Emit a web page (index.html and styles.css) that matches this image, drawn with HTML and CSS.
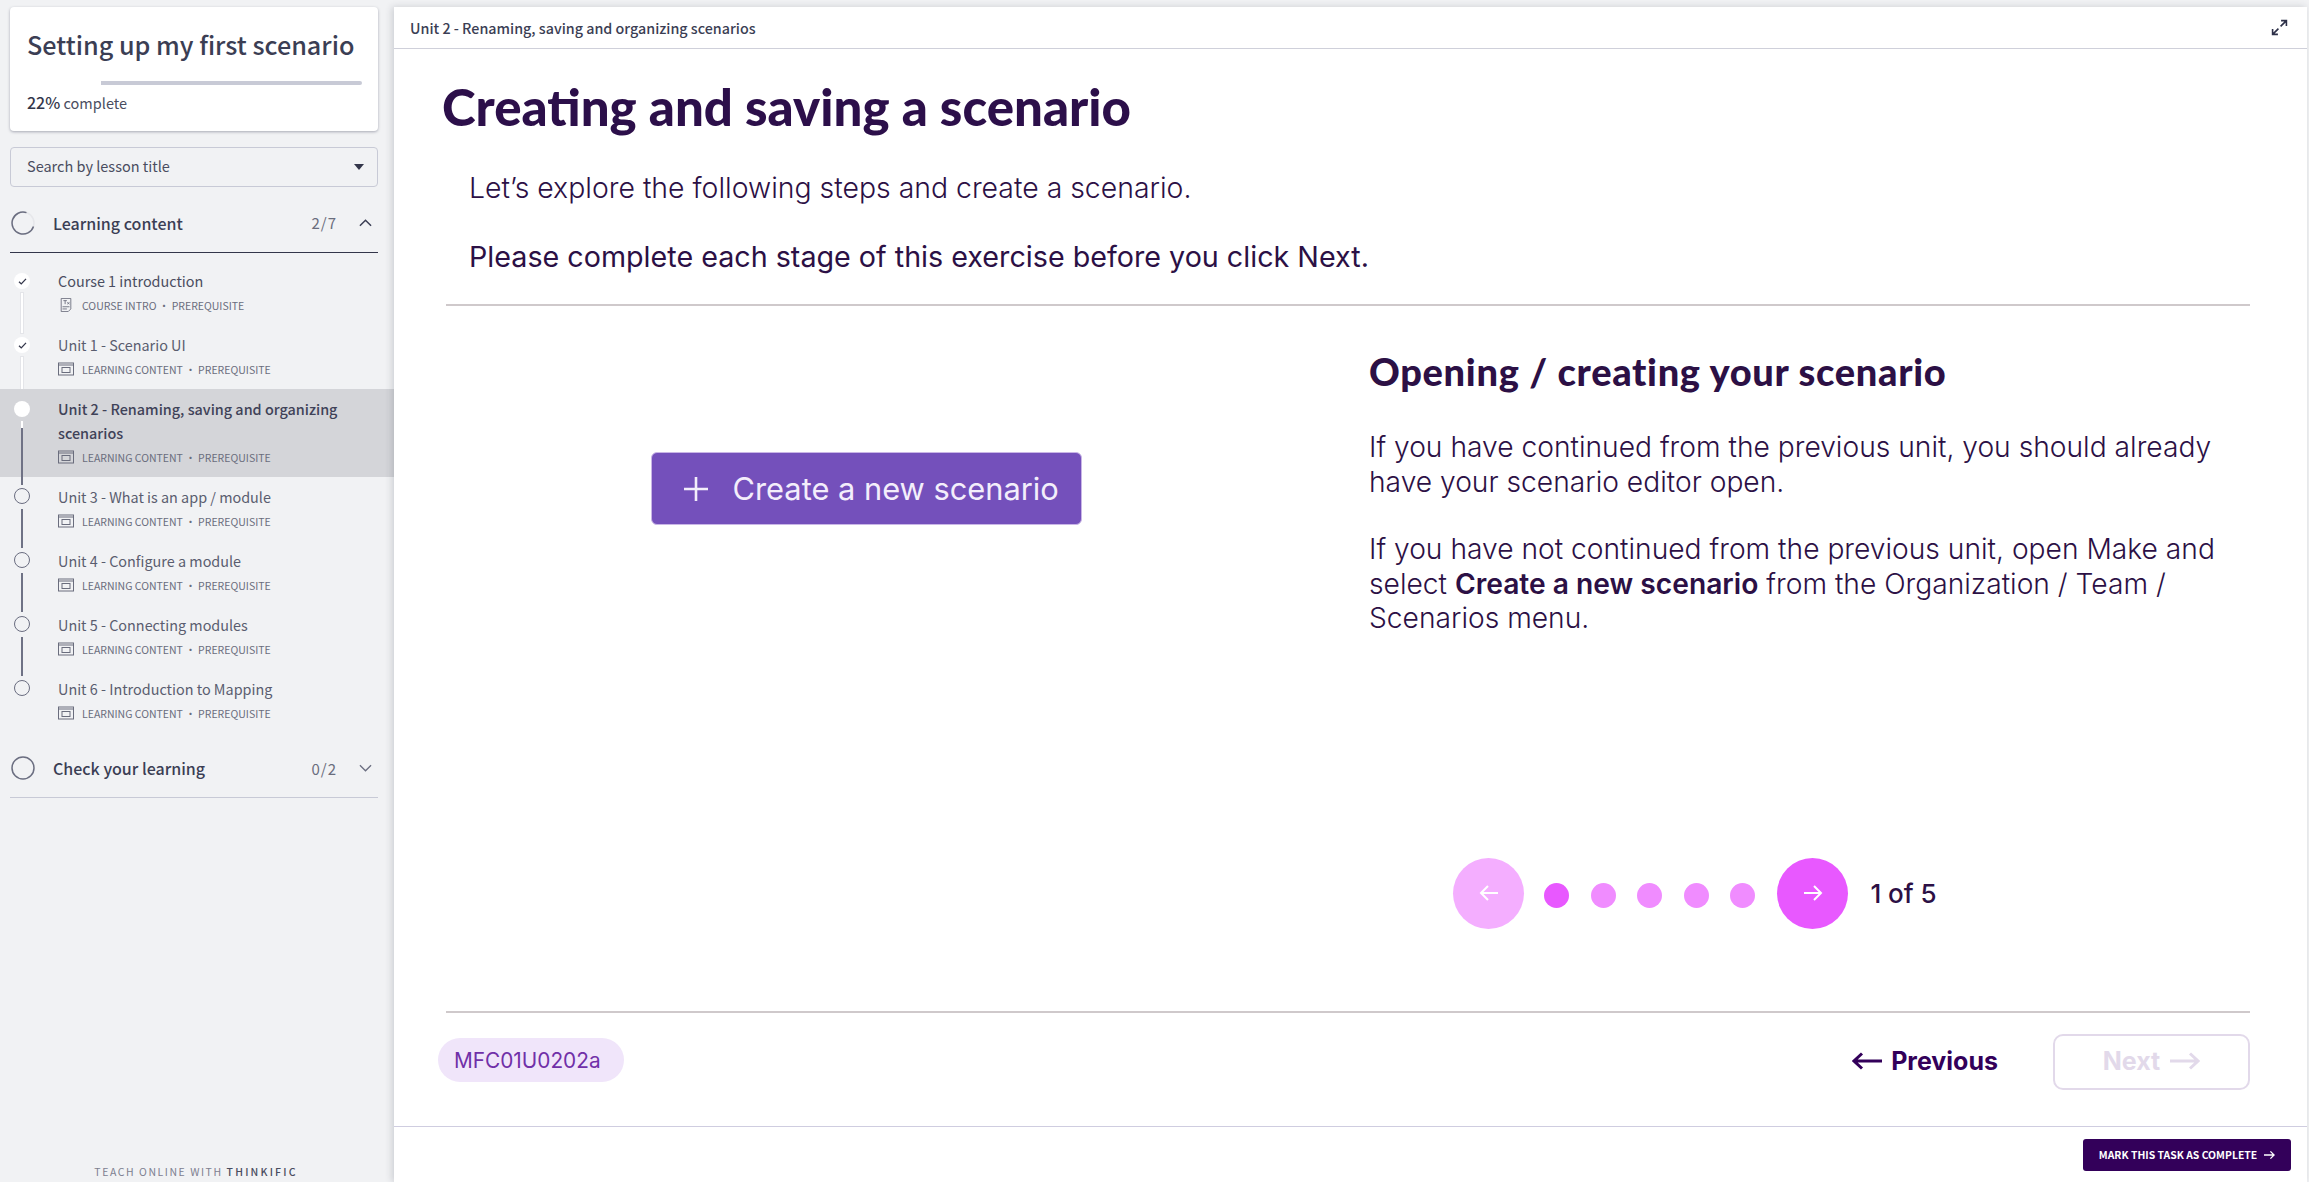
FILE: index.html
```html
<!DOCTYPE html>
<html lang="en">
<head>
    <meta charset="UTF-8">
    <title>Creating and saving a scenario</title>
    <link rel="stylesheet" href="styles.css">
</head>
<body>
    <aside class="sidebar">
        <div class="course-card">
            <h2 class="course-title">Setting up my first scenario</h2>
            <div class="progress"><div class="progress-fill"></div></div>
            <p class="progress-text"><b>22%</b> complete</p>
        </div>

        <div class="search">
            <span>Search by lesson title</span>
            <span class="caret"></span>
        </div>

        <div class="chapter chapter-open">
            <svg class="ring" viewBox="0 0 24 24"><circle cx="12" cy="12" r="11" fill="none" stroke="#e6e7ea" stroke-width="1.5"/><path d="M22.5 15.5A11 11 0 1 1 15.5 1.6" fill="none" stroke="#6b6e80" stroke-width="1.5"/></svg>
            <span class="chapter-title">Learning content</span>
            <span class="chapter-count">2/7</span>
            <svg class="chevron" viewBox="0 0 14 8"><path d="M1 7l6-6 6 6" fill="none" stroke="#3b3e54" stroke-width="1.6"/></svg>
        </div>

        <ul class="lessons">
            <li class="lesson-item">
                <span class="dot dot-done"><svg viewBox="0 0 10 8"><path d="M1 4.2l2.6 2.5L9 1" fill="none" stroke="#33364a" stroke-width="1.5"/></svg></span>
                <span class="link link-done"></span>
                <div class="lesson-name lesson-name-dark">Course 1 introduction</div>
                <div class="lesson-meta">
                    <svg class="meta-icon" viewBox="0 0 16 16"><path d="M2.5.5h11v12l-3 3h-8z" fill="none" stroke="#6a6d7d"/><path d="M5 3h4M7 3v4M9.500 5l2.500 2M12 5l-2.500 2M4 10h8M4 12.500h5" fill="none" stroke="#6a6d7d"/></svg>
                    <span>COURSE INTRO &middot; PREREQUISITE</span>
                </div>
            </li>
            <li class="lesson-item">
                <span class="dot dot-done"><svg viewBox="0 0 10 8"><path d="M1 4.2l2.6 2.5L9 1" fill="none" stroke="#33364a" stroke-width="1.5"/></svg></span>
                <span class="link link-done"></span>
                <div class="lesson-name">Unit 1 - Scenario UI</div>
                <div class="lesson-meta">
                    <svg class="meta-icon" viewBox="0 0 16 13"><rect x=".5" y=".5" width="15" height="12" fill="none" stroke="#6a6d7d"/><path d="M.5 2.500h15" stroke="#6a6d7d"/><rect x="4" y="5" width="8" height="5" fill="none" stroke="#6a6d7d"/></svg>
                    <span>LEARNING CONTENT &middot; PREREQUISITE</span>
                </div>
            </li>
            <li class="lesson-item lesson-active">
                <span class="dot dot-current"></span>
                <span class="link link-current"></span>
                <div class="lesson-name">Unit 2 - Renaming, saving and organizing scenarios</div>
                <div class="lesson-meta">
                    <svg class="meta-icon" viewBox="0 0 16 13"><rect x=".5" y=".5" width="15" height="12" fill="none" stroke="#6a6d7d"/><path d="M.5 2.500h15" stroke="#6a6d7d"/><rect x="4" y="5" width="8" height="5" fill="none" stroke="#6a6d7d"/></svg>
                    <span>LEARNING CONTENT &middot; PREREQUISITE</span>
                </div>
            </li>
            <li class="lesson-item">
                <span class="dot dot-todo"></span>
                <span class="link link-todo"></span>
                <div class="lesson-name">Unit 3 - What is an app / module</div>
                <div class="lesson-meta">
                    <svg class="meta-icon" viewBox="0 0 16 13"><rect x=".5" y=".5" width="15" height="12" fill="none" stroke="#6a6d7d"/><path d="M.5 2.500h15" stroke="#6a6d7d"/><rect x="4" y="5" width="8" height="5" fill="none" stroke="#6a6d7d"/></svg>
                    <span>LEARNING CONTENT &middot; PREREQUISITE</span>
                </div>
            </li>
            <li class="lesson-item">
                <span class="dot dot-todo"></span>
                <span class="link link-todo"></span>
                <div class="lesson-name">Unit 4 - Configure a module</div>
                <div class="lesson-meta">
                    <svg class="meta-icon" viewBox="0 0 16 13"><rect x=".5" y=".5" width="15" height="12" fill="none" stroke="#6a6d7d"/><path d="M.5 2.500h15" stroke="#6a6d7d"/><rect x="4" y="5" width="8" height="5" fill="none" stroke="#6a6d7d"/></svg>
                    <span>LEARNING CONTENT &middot; PREREQUISITE</span>
                </div>
            </li>
            <li class="lesson-item">
                <span class="dot dot-todo"></span>
                <span class="link link-todo"></span>
                <div class="lesson-name">Unit 5 - Connecting modules</div>
                <div class="lesson-meta">
                    <svg class="meta-icon" viewBox="0 0 16 13"><rect x=".5" y=".5" width="15" height="12" fill="none" stroke="#6a6d7d"/><path d="M.5 2.500h15" stroke="#6a6d7d"/><rect x="4" y="5" width="8" height="5" fill="none" stroke="#6a6d7d"/></svg>
                    <span>LEARNING CONTENT &middot; PREREQUISITE</span>
                </div>
            </li>
            <li class="lesson-item">
                <span class="dot dot-todo"></span>
                <div class="lesson-name">Unit 6 - Introduction to Mapping</div>
                <div class="lesson-meta">
                    <svg class="meta-icon" viewBox="0 0 16 13"><rect x=".5" y=".5" width="15" height="12" fill="none" stroke="#6a6d7d"/><path d="M.5 2.500h15" stroke="#6a6d7d"/><rect x="4" y="5" width="8" height="5" fill="none" stroke="#6a6d7d"/></svg>
                    <span>LEARNING CONTENT &middot; PREREQUISITE</span>
                </div>
            </li>
        </ul>

        <div class="chapter chapter-closed">
            <svg class="ring" viewBox="0 0 24 24"><circle cx="12" cy="12" r="11" fill="none" stroke="#6b6e80" stroke-width="1.5"/></svg>
            <span class="chapter-title">Check your learning</span>
            <span class="chapter-count">0/2</span>
            <svg class="chevron" viewBox="0 0 14 8"><path d="M1 1l6 6 6-6" fill="none" stroke="#6b6e80" stroke-width="1.4"/></svg>
        </div>

        <div class="powered">TEACH ONLINE WITH <b>THINKIFIC</b></div>
    </aside>

    <main class="player">
        <header class="topbar">
            <span class="topbar-title">Unit 2 - Renaming, saving and organizing scenarios</span>
            <svg class="expand" viewBox="0 0 16 16"><path d="M9.500 1.500h5v5M14.500 1.500L9 7M6.500 14.500h-5v-5M1.500 14.500L7 9" fill="none" stroke="#2d3048" stroke-width="1.500"/></svg>
        </header>

        <section class="content">
            <h1 class="page-title">Creating and saving a scenario</h1>
            <p class="intro intro-light">Let&rsquo;s explore the following steps and create a scenario.</p>
            <p class="intro">Please complete each stage of this exercise before you click Next.</p>

            <div class="slide">
                <div class="slide-image">
                    <div class="fake-button">
                        <svg viewBox="0 0 26 26"><path d="M13 1v24M1 13h24" fill="none" stroke="#f3eefb" stroke-width="2.600"/></svg>
                        <span>Create a new scenario</span>
                    </div>
                </div>
                <div class="slide-text">
                    <h2 class="slide-title">Opening / creating your scenario</h2>
                    <p>If you have continued from the previous unit, you should already have your scenario editor open.</p>
                    <p>If you have not continued from the previous unit, open Make and select <b>Create a new scenario</b> from the Organization / Team / Scenarios menu.</p>

                    <div class="pager">
                        <span class="pager-btn pager-btn-off"><svg viewBox="0 0 20 18"><path d="M19 9H2M9 2L2 9l7 7" fill="none" stroke="#fff" stroke-width="2"/></svg></span>
                        <div class="pager-dots">
                            <span class="pager-dot pager-dot-on"></span>
                            <span class="pager-dot"></span>
                            <span class="pager-dot"></span>
                            <span class="pager-dot"></span>
                            <span class="pager-dot"></span>
                        </div>
                        <span class="pager-btn"><svg viewBox="0 0 20 18"><path d="M1 9h17M11 2l7 7-7 7" fill="none" stroke="#fff" stroke-width="2"/></svg></span>
                        <span class="pager-count">1 of 5</span>
                    </div>
                </div>
            </div>

            <div class="slide-footer">
                <span class="code-pill">MFC01U0202a</span>
                <div class="nav-buttons">
                    <a class="nav-prev"><svg viewBox="0 0 30 18"><path d="M30 9H2M10 1.500L2 9l8 7.500" fill="none" stroke="#33005a" stroke-width="3"/></svg>Previous</a>
                    <a class="nav-next">Next<svg viewBox="0 0 30 18"><path d="M0 9h28M20 1.500L28 9l-8 7.500" fill="none" stroke="#e2d9ea" stroke-width="3"/></svg></a>
                </div>
            </div>
        </section>

        <footer class="player-footer">
            <button class="complete-btn">MARK THIS TASK AS COMPLETE<svg viewBox="0 0 12 10"><path d="M0 5h10.500M7 1l4 4-4 4" fill="none" stroke="#fff" stroke-width="1.400"/></svg></button>
        </footer>
    </main>
</body>
</html>
```

FILE: styles.css
```css
* {
    margin: 0;
    padding: 0;
    box-sizing: border-box;
}

html, body {
    height: 100%;
}

body {
    display: flex;
    height: 1182px;
    overflow: hidden;
    background: #f1f2f4;
    font-family: "Noto Sans CJK SC", "Noto Sans", sans-serif;
    color: #3b3e54;
}

/* Sidebar */
.sidebar {
    width: 394px;
    flex-shrink: 0;
    display: flex;
    flex-direction: column;
    padding-top: 7px;
}

.course-card {
    margin: 0 16px 0 10px;
    height: 124px;
    padding: 20px 16px 0 17px;
    background: #fff;
    border-radius: 4px;
    box-shadow: 0 1px 3px rgba(30, 32, 60, 0.35);
}

.course-title {
    font-size: 25.200px;
    line-height: 34px;
    font-weight: 500;
    white-space: nowrap;
}

.progress {
    height: 4px;
    margin-top: 20px;
    background: #c8cad6;
    border-radius: 2px;
}

.progress-fill {
    width: 22%;
    height: 100%;
    background: #fff;
}

.progress-text {
    margin-top: 5px;
    font-size: 14.500px;
    line-height: 24px;
    color: #4a4d60;
}

.progress-text b {
    font-size: 16px;
    font-weight: 500;
    color: #33364a;
}

.search {
    display: flex;
    justify-content: space-between;
    align-items: center;
    height: 40px;
    margin: 16px 16px 0 10px;
    padding: 0 13px 3px 16px;
    border: 1px solid #c8cad6;
    border-radius: 4px;
    font-size: 14.500px;
    color: #4a4d60;
}

.caret {
    width: 0;
    height: 0;
    margin-top: 3px;
    border-left: 5px solid transparent;
    border-right: 5px solid transparent;
    border-top: 6px solid #33364a;
}

.chapter {
    position: relative;
    display: flex;
    align-items: center;
    margin: 0 16px 0 10px;
    padding-top: 6px;
}

.chapter-open {
    height: 66px;
    border-bottom: 1px solid #33364a;
}

.chapter-closed {
    height: 65px;
    border-bottom: 1px solid #c8cad6;
}

.ring {
    width: 24px;
    height: 24px;
    margin-left: 1px;
}

.chapter-title {
    flex: 1;
    margin-left: 18px;
    font-size: 16px;
    font-weight: 500;
}

.chapter-count {
    margin-right: -1px;
    font-size: 15px;
    letter-spacing: 1px;
    color: #6a6d7d;
}

.chevron {
    width: 13px;
    height: 8px;
    margin: 0 6px 0 23px;
}

.lessons {
    list-style: none;
    margin-top: 8px;
}

.lesson-item {
    position: relative;
    padding: 8px 30px 8px 58px;
}

.lesson-active {
    background: #d4d5d9;
}

.lesson-name {
    font-size: 14.400px;
    line-height: 24px;
    color: #5a5d6f;
}

.lesson-name-dark {
    color: #4a4d60;
}

.lesson-active .lesson-name {
    color: #3f4258;
    font-weight: 500;
}

.lesson-meta {
    display: flex;
    align-items: center;
    height: 24px;
    font-size: 10.500px;
    color: #6a6d7d;
    white-space: nowrap;
}

.meta-icon {
    width: 16px;
    height: 14px;
    margin-right: 8px;
}

.dot {
    position: absolute;
    left: 14px;
    top: 12px;
    width: 16px;
    height: 16px;
    border-radius: 50%;
    background: #fff;
    display: flex;
    align-items: center;
    justify-content: center;
}

.dot svg {
    width: 9px;
    height: 7px;
}

.dot-todo {
    top: 11px;
    background: transparent;
    border: 1px solid #6a6d80;
}

.link {
    position: absolute;
    left: 21px;
    top: 32px;
    width: 2px;
    height: 40px;
}

.link-done {
    background: #fff;
    box-shadow: 0 0 0 1px #e4e5e9;
}

.link-current {
    height: 64px;
    background: linear-gradient(#fff 7px, #6f7285 7px);
}

.link-todo {
    height: 39px;
    background: #6f7285;
}

.powered {
    margin-top: auto;
    padding: 0 2px 2px 0;
    text-align: center;
    font-size: 10.500px;
    line-height: 16px;
    letter-spacing: 1.550px;
    color: #7d8090;
}

.powered b {
    font-weight: 500;
    letter-spacing: 2.200px;
    color: #4a4d60;
}

/* Player */
.player {
    flex: 1;
    display: flex;
    flex-direction: column;
    margin: 7px 2px 0 0;
    background: #fff;
    box-shadow: -2px 0 7px rgba(40, 42, 60, 0.18);
    z-index: 2;
}

.topbar {
    display: flex;
    justify-content: space-between;
    align-items: center;
    height: 42px;
    padding: 0 19px 0 16px;
    border-bottom: 1px solid #cfd0da;
}

.topbar-title {
    font-size: 14.300px;
    font-weight: 500;
}

.expand {
    width: 17px;
    height: 17px;
}

.content {
    height: 1077px;
    padding: 0 57px 0 52px;
    display: flex;
    flex-direction: column;
    font-family: Inter, sans-serif;
    color: #2c1045;
}

.page-title {
    margin: 28px 0 0 -4px;
    font-family: Lato, sans-serif;
    font-size: 51px;
    line-height: 60px;
    font-weight: 900;
    color: #2c0f4a;
}

.intro {
    margin: 33px 0 0 23px;
    font-size: 28.700px;
    line-height: 36px;
}

.intro-light {
    margin-top: 33px;
    font-size: 28.400px;
    font-weight: 300;
}

.slide {
    flex: 1;
    display: grid;
    grid-template-columns: 840px 1fr;
    column-gap: 83px;
    margin-top: 29px;
    border-top: 2px solid #cfc9cb;
    border-bottom: 2px solid #cfc9cb;
}

.slide-image {
    display: flex;
    justify-content: center;
    align-items: flex-start;
    padding-top: 146px;
}

.fake-button {
    display: flex;
    align-items: center;
    gap: 24px;
    width: 431px;
    height: 73px;
    padding-left: 31px;
    background: #7450bb;
    border: 1px solid #c9b6e6;
    border-radius: 6px;
    color: #f3eefb;
    font-size: 30.800px;
    white-space: nowrap;
}

.fake-button svg {
    width: 26px;
    height: 26px;
}

.slide-text {
    padding-top: 45px;
}

.slide-title {
    font-family: Lato, sans-serif;
    font-size: 38px;
    line-height: 40px;
    font-weight: 900;
    letter-spacing: 0.680px;
    margin-bottom: 39px;
}

.slide-text p {
    width: 870px;
    font-size: 28.200px;
    font-weight: 300;
    line-height: 34.500px;
    margin-bottom: 33px;
}

.slide-text p b {
    font-weight: 600;
}

.pager {
    display: flex;
    align-items: center;
    margin: 222px 0 0 84px;
}

.pager-btn {
    width: 71px;
    height: 71px;
    flex-shrink: 0;
    border-radius: 50%;
    background: #e858ff;
    display: flex;
    align-items: center;
    justify-content: center;
}

.pager-btn svg {
    width: 20px;
    height: 18px;
}

.pager-btn-off {
    background: #f4aeff;
}

.pager-dots {
    display: flex;
    gap: 21.600px;
    margin: 4px 22px 0 20px;
}

.pager-dot {
    width: 25px;
    height: 25px;
    border-radius: 50%;
    background: #f08cff;
}

.pager-dot-on {
    background: #e858ff;
}

.pager-count {
    margin-left: 22px;
    font-size: 26px;
    font-weight: 500;
}

.slide-footer {
    height: 113px;
    display: flex;
    justify-content: space-between;
    align-items: flex-start;
    margin-left: -8px;
}

.code-pill {
    display: flex;
    align-items: center;
    height: 44px;
    padding: 0 23px 0 16px;
    margin-top: 25px;
    border-radius: 22px;
    background: #f0e5fa;
    color: #7030a8;
    font-size: 20.800px;
}

.nav-buttons {
    display: flex;
    align-items: center;
    gap: 55px;
    margin-top: 21px;
}

.nav-prev, .nav-next {
    display: flex;
    align-items: center;
    padding-bottom: 2px;
    font-size: 25px;
    font-weight: 700;
    color: #33005a;
}

.nav-prev svg {
    width: 30px;
    height: 18px;
    margin-right: 9px;
}

.nav-next {
    justify-content: center;
    gap: 10px;
    width: 197px;
    height: 56px;
    border: 2px solid #e2d9ea;
    border-radius: 10px;
    color: #e2d9ea;
}

.nav-next svg {
    width: 30px;
    height: 18px;
}

.player-footer {
    flex: 1;
    display: flex;
    justify-content: flex-end;
    align-items: center;
    padding: 0 16px 0 0;
    border-top: 1px solid #cfcde0;
}

.complete-btn {
    display: flex;
    align-items: center;
    justify-content: center;
    gap: 7px;
    width: 208px;
    height: 32px;
    background: #33005a;
    border: 0;
    border-radius: 3px;
    color: #fff;
    font-family: "Noto Sans CJK SC", sans-serif;
    font-size: 10.400px;
    font-weight: 700;
}

.complete-btn svg {
    width: 11px;
    height: 10px;
}
```
